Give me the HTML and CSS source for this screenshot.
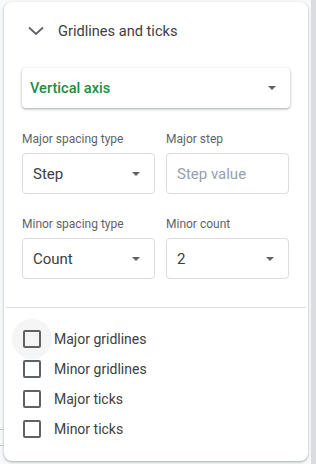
FILE: index.html
```html
<!DOCTYPE html>
<html lang="en">
<head>
    <meta charset="UTF-8">
    <meta name="viewport" content="width=device-width, initial-scale=1.0">
    <title>Gridlines and ticks</title>
    <link rel="stylesheet" href="styles.css">
</head>
<body>
    <div class="page">
        <div class="sheet-lines">
            <span></span>
            <span></span>
        </div>

        <div class="panel">
            <div class="section-header">
                <svg class="chevron" width="16" height="10" viewBox="0 0 16 10">
                    <path d="M1 1.5 L8 8 L15 1.5" fill="none" stroke="#5f6368" stroke-width="1.8"/>
                </svg>
                <span class="section-title">Gridlines and ticks</span>
            </div>

            <div class="axis-select">
                <span class="axis-value">Vertical axis</span>
                <span class="caret"></span>
            </div>

            <div class="field-grid">
                <div class="field">
                    <label class="field-label">Major spacing type</label>
                    <div class="select-box">
                        <span>Step</span>
                        <span class="caret"></span>
                    </div>
                </div>
                <div class="field">
                    <label class="field-label">Major step</label>
                    <div class="select-box">
                        <span class="placeholder">Step value</span>
                    </div>
                </div>
                <div class="field">
                    <label class="field-label">Minor spacing type</label>
                    <div class="select-box">
                        <span>Count</span>
                        <span class="caret"></span>
                    </div>
                </div>
                <div class="field">
                    <label class="field-label">Minor count</label>
                    <div class="select-box">
                        <span>2</span>
                        <span class="caret"></span>
                    </div>
                </div>
            </div>

            <div class="divider"></div>

            <div class="checkbox-list">
                <div class="checkbox-row hover">
                    <span class="checkbox"></span>
                    <span class="checkbox-label">Major gridlines</span>
                </div>
                <div class="checkbox-row">
                    <span class="checkbox"></span>
                    <span class="checkbox-label">Minor gridlines</span>
                </div>
                <div class="checkbox-row">
                    <span class="checkbox"></span>
                    <span class="checkbox-label">Major ticks</span>
                </div>
                <div class="checkbox-row">
                    <span class="checkbox"></span>
                    <span class="checkbox-label">Minor ticks</span>
                </div>
            </div>
        </div>

        <div class="scroll-track"></div>
    </div>
</body>
</html>
```

FILE: styles.css
```css
* {
    margin: 0;
    padding: 0;
    box-sizing: border-box;
    font-family: Roboto, "Liberation Sans", sans-serif;
}

body {
    background-color: #f8f9fa;
    overflow: hidden;
}

.page {
    display: flex;
    height: 464px;
    position: relative;
}

.sheet-lines {
    position: absolute;
    left: 0;
    top: 429px;
    width: 4px;
}

.sheet-lines span {
    display: block;
    height: 1px;
    margin-bottom: 15px;
    background: #c8c8c8;
}

.panel {
    width: 304px;
    height: 459px;
    margin: 2px 0 0 4px;
    background: white;
    border-radius: 8px;
    box-shadow: 0 1px 2px rgba(60, 64, 67, 0.3), 0 1px 3px 1px rgba(60, 64, 67, 0.1);
}

.scroll-track {
    width: 5px;
    margin-left: auto;
    background: #dadce0;
}

.section-header {
    display: flex;
    align-items: center;
    height: 58px;
    padding-left: 24px;
}

.chevron {
    margin-right: 14px;
}

.section-title {
    font-size: 14.6px;
    color: #3c4043;
}

.axis-select {
    display: flex;
    align-items: center;
    justify-content: space-between;
    width: 268px;
    height: 40px;
    margin: 8px 0 0 18px;
    padding: 0 14px 0 8px;
    border-radius: 4px;
    box-shadow: 0 1px 2px rgba(60, 64, 67, 0.3), 0 1px 3px 1px rgba(60, 64, 67, 0.12);
}

.axis-value {
    font-size: 14.6px;
    font-weight: 500;
    color: #1e8e3e;
}

.caret {
    width: 0;
    height: 0;
    border-left: 4px solid transparent;
    border-right: 4px solid transparent;
    border-top: 4px solid #5f6368;
}

.field-grid {
    display: grid;
    grid-template-columns: 133px 123px;
    column-gap: 11px;
    row-gap: 22px;
    margin: 23px 0 0 18px;
}

.field-label {
    display: block;
    height: 22px;
    font-size: 12px;
    color: #5f6368;
    line-height: 17px;
}

.select-box {
    display: flex;
    align-items: center;
    justify-content: space-between;
    height: 41px;
    padding: 0 14px 0 10px;
    border: 1px solid #dadce0;
    border-radius: 4px;
    font-size: 15px;
    color: #3c4043;
}

.placeholder {
    color: #9aa0a6;
}

.divider {
    height: 1px;
    margin: 28px 2px 0;
    background: #dadce0;
}

.checkbox-list {
    padding: 16px 0 0 19px;
}

.checkbox-row {
    display: flex;
    align-items: center;
    height: 30px;
    position: relative;
}

.checkbox {
    width: 18px;
    height: 18px;
    border: 2px solid #5f6368;
    border-radius: 2px;
    margin-right: 13px;
    position: relative;
    z-index: 1;
}

.checkbox-row.hover::before {
    content: "";
    position: absolute;
    left: -11px;
    top: -5px;
    width: 40px;
    height: 40px;
    border-radius: 50%;
    background: #f5f5f5;
}

.checkbox-label {
    font-size: 14px;
    color: #3c4043;
}
```
